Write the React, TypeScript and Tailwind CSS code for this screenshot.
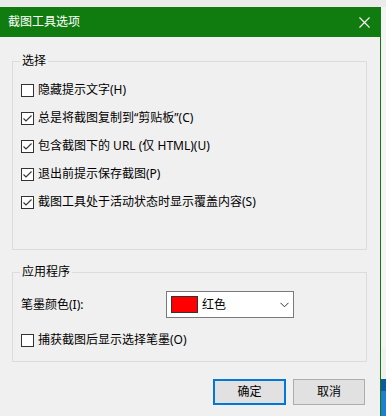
const font = { fontFamily: '"Noto Sans", "Noto Sans CJK SC", sans-serif' };

const options = [
  { label: "隐藏提示文字(H)", checked: false },
  { label: "总是将截图复制到“剪贴板”(C)", checked: true },
  { label: "包含截图下的 URL (仅 HTML)(U)", checked: true },
  { label: "退出前提示保存截图(P)", checked: true },
  { label: "截图工具处于活动状态时显示覆盖内容(S)", checked: true },
];

const CheckBox = ({ checked }: { checked: boolean }) => (
  <span className="w-[13px] h-[13px] border border-[#333333] bg-white flex items-center justify-center shrink-0">
    {checked && (
      <svg width="11" height="11" viewBox="0 0 11 11">
        <polyline points="1.5,5.5 4,8 9.5,2.5" fill="none" stroke="#333333" strokeWidth="1.1" />
      </svg>
    )}
  </span>
);

const CheckRow = ({ label, checked }: { label: string; checked: boolean }) => (
  <div className="flex items-center h-[16px] gap-[4px]">
    <CheckBox checked={checked} />
    <span className="text-[12px] leading-[16px] text-black whitespace-nowrap">{label}</span>
  </div>
);

const GroupBox = ({ title, className, children }: { title: string; className: string; children: React.ReactNode }) => (
  <div className={`relative border border-[#dcdcdc] ml-[12px] mr-[13px] pl-[8px] ${className}`}>
    <span className="absolute left-[7px] -top-[9px] px-[2px] bg-[#f0f0f0] text-[12px] leading-[16px] text-black">
      {title}
    </span>
    {children}
  </div>
);

export default function App() {
  return (
    <div className="w-[386px] h-[416px] bg-[#f0f0f0] flex flex-col overflow-hidden" style={font}>
      <div className="h-[7px] bg-[#ebebeb] shrink-0" />
      <div className="flex flex-1">
        <div className="w-[381px] border-r border-[#107c10] flex flex-col bg-[#f0f0f0]">
          {/* title bar */}
          <div className="h-[30px] bg-[#107c10] flex items-center justify-between pl-[8px] pr-[10px] shrink-0">
            <span className="text-white text-[12px] leading-[16px]">截图工具选项</span>
            <svg width="11" height="11" viewBox="0 0 11 11">
              <path d="M0.5 0.5 L10.5 10.5 M10.5 0.5 L0.5 10.5" stroke="white" strokeWidth="1.1" />
            </svg>
          </div>

          <GroupBox title="选择" className="mt-[24px] h-[189px] pt-[20px]">
            <div className="flex flex-col gap-[12px]">
              {options.map((o) => (
                <CheckRow key={o.label} label={o.label} checked={o.checked} />
              ))}
            </div>
          </GroupBox>

          <GroupBox title="应用程序" className="mt-[22px] h-[90px] pt-[18px]">
            <div className="flex items-center">
              <span className="w-[145px] text-[12px] leading-[16px] text-black">笔墨颜色(I):</span>
              <div className="w-[128px] h-[27px] border border-[#7a7a7a] bg-white flex items-center pl-[4px] pr-[4px]">
                <span className="w-[27px] h-[17px] bg-[#ff0000] border border-[#333333]" />
                <span className="ml-[4px] text-[12px] leading-[16px] text-black flex-1">红色</span>
                <svg width="9" height="6" viewBox="0 0 9 6">
                  <polyline points="0.5,0.8 4.5,4.8 8.5,0.8" fill="none" stroke="#333333" strokeWidth="1" />
                </svg>
              </div>
            </div>
            <div className="mt-[14px]">
              <CheckRow label="捕获截图后显示选择笔墨(O)" checked={false} />
            </div>
          </GroupBox>

          <div className="flex justify-end gap-[7px] mt-[17px] pr-[15px]">
            <button className="w-[73px] h-[26px] border-2 border-[#0078d7] bg-[#e1e1e1] text-[12px] leading-[16px] text-black">
              确定
            </button>
            <button className="w-[72px] h-[26px] border border-[#adadad] bg-[#e1e1e1] text-[12px] leading-[16px] text-black">
              取消
            </button>
          </div>
        </div>

        {/* sliver of the window behind */}
        <div className="flex-1 flex flex-col">
          <div className="h-[342px] bg-[#f4f4f4]" />
          <div className="h-[30px] bg-[#f0f0f0]" />
          <div className="h-[12px] bg-[#0e5a9c]" />
          <div className="flex-1 bg-[#1e7fd0]" />
        </div>
      </div>
    </div>
  );
}
